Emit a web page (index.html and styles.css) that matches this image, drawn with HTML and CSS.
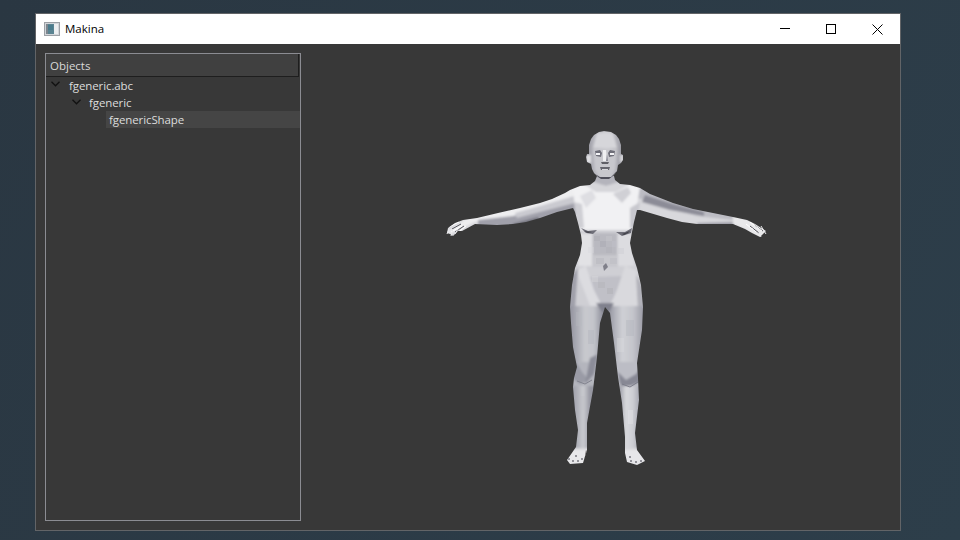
FILE: index.html
```html
<!DOCTYPE html>
<html lang="en">
<head>
<meta charset="utf-8">
<title>Makina</title>
<link rel="stylesheet" href="styles.css">
</head>
<body>
<div class="window">
  <header class="titlebar">
    <svg class="app-icon" width="16" height="14" viewBox="0 0 16 14">
      <rect x="0.5" y="0.5" width="15" height="13" fill="#d3d6da" stroke="#9da1a6"/>
      <rect x="2" y="2" width="8" height="10" fill="#5a8492"/>
      <rect x="2" y="2" width="2" height="10" fill="#7d868e"/>
      <rect x="4" y="3" width="5" height="5" fill="#4a7b8c"/>
      <rect x="10" y="2" width="4" height="10" fill="#eceef0"/>
    </svg>
    <span class="title">Makina</span>
    <div class="controls">
      <button class="ctl"><svg width="10" height="10" viewBox="0 0 10 10"><path d="M0 4.5H10" stroke="#000" fill="none"/></svg></button>
      <button class="ctl"><svg width="10" height="10" viewBox="0 0 10 10"><rect x="0.5" y="0.5" width="9" height="9" stroke="#000" fill="none"/></svg></button>
      <button class="ctl"><svg width="11" height="11" viewBox="0 0 11 11"><path d="M0.5 0.5L10.5 10.5M10.5 0.5L0.5 10.5" stroke="#000" fill="none"/></svg></button>
    </div>
  </header>
  <main class="content">
    <section class="panel">
      <div class="panel-head">Objects</div>
      <ul class="tree">
        <li class="row lvl0"><svg class="chev" width="9" height="6" viewBox="0 0 9 6"><path d="M0.5 0.8L4.5 4.8L8.5 0.8" fill="none" stroke="#111" stroke-width="1.3"/></svg>fgeneric.abc</li>
        <li class="row lvl1"><svg class="chev" width="9" height="6" viewBox="0 0 9 6"><path d="M0.5 0.8L4.5 4.8L8.5 0.8" fill="none" stroke="#111" stroke-width="1.3"/></svg>fgeneric</li>
        <li class="row lvl2"><span class="sel">fgenericShape</span></li>
      </ul>
    </section>
    <div class="viewport">
      <svg class="figure" width="335" height="345" viewBox="440 125 335 345">
        <defs>
          <filter id="soft" x="-5%" y="-5%" width="110%" height="110%"><feGaussianBlur stdDeviation="1"/></filter>
          <filter id="softer" x="-20%" y="-20%" width="140%" height="140%"><feGaussianBlur stdDeviation="0.6"/></filter>
          <clipPath id="body"><path shape-rendering="crispEdges" d="M597 176L595 181L590 185L580 186L570 190L565 193L552 199L540 203L520 208L498 213L477 218L463 220L455 223L448 228L447 233L450 234L453 236L458 231L462 231L475 224L497 225L513 224L526 222L540 218L557 212L573 208L575 212L578 223L581 235L582 243L580 255L575 268L572 285L570 307L571 323L573 347L577 367L574 378L573 387L575 410L578 430L576 447L567 460L570 464L583 463L587 450L587 423L593 390L597 357L600 323L605 307L610 313L614 343L618 377L622 403L625 437L625 453L627 462L637 465L645 461L637 450L635 433L639 400L638 378L637 363L642 330L643 307L641 285L637 268L632 253L630 243L632 232L634 222L637 210L640 210L667 218L682 222L697 224L733 224L745 229L752 233L760 237L766 231L755 224L747 220L733 217L693 209L673 203L650 194L640 188L630 185L620 184L615 180L614 176Z"/></clipPath>
          <clipPath id="headclip"><path shape-rendering="crispEdges" d="M604 131L599 132L594 135L591 139L589 145L589 154L587 154L586 157L587 162L591 164L592 169L594 173L598 177L601 179L609 179L613 176L617 171L618 165L621 163L623 160L623 155L621 154L621 145L619 139L616 135L611 132Z"/></clipPath>
          <linearGradient id="thighL" x1="570" x2="603" y1="0" y2="0" gradientUnits="userSpaceOnUse">
            <stop offset="0" stop-color="#92939e"/><stop offset=".2" stop-color="#a9aab3"/><stop offset=".45" stop-color="#c8c9ce"/><stop offset=".72" stop-color="#c4c5cb"/><stop offset=".88" stop-color="#a5a6af"/><stop offset="1" stop-color="#8c8d99"/>
          </linearGradient>
          <linearGradient id="thighR" x1="608" x2="644" y1="0" y2="0" gradientUnits="userSpaceOnUse">
            <stop offset="0" stop-color="#8f909b"/><stop offset=".2" stop-color="#b3b4bc"/><stop offset=".4" stop-color="#cfd0d5"/><stop offset=".7" stop-color="#c4c5cb"/><stop offset=".88" stop-color="#a9aab3"/><stop offset="1" stop-color="#9a9ba5"/>
          </linearGradient>
          <linearGradient id="shinL" x1="573" x2="590" y1="0" y2="0" gradientUnits="userSpaceOnUse">
            <stop offset="0" stop-color="#a0a1ab"/><stop offset=".3" stop-color="#b2b3bb"/><stop offset=".6" stop-color="#cbccd1"/><stop offset=".8" stop-color="#b2b3bb"/><stop offset="1" stop-color="#9697a2"/>
          </linearGradient>
          <linearGradient id="shinR" x1="620" x2="640" y1="0" y2="0" gradientUnits="userSpaceOnUse">
            <stop offset="0" stop-color="#a0a1ab"/><stop offset=".3" stop-color="#d8d9dd"/><stop offset=".65" stop-color="#cdced3"/><stop offset=".85" stop-color="#b5b6be"/><stop offset="1" stop-color="#a4a5af"/>
          </linearGradient>
          <linearGradient id="headg" x1="0" x2="1" y1="0" y2="0">
            <stop offset="0" stop-color="#85858f"/><stop offset=".18" stop-color="#b0b0b8"/><stop offset=".55" stop-color="#cfcfd3"/><stop offset=".85" stop-color="#a8a8b0"/><stop offset="1" stop-color="#7e7e88"/>
          </linearGradient>
        </defs>

        <g clip-path="url(#body)">
          <g filter="url(#soft)">
            <rect x="440" y="170" width="340" height="300" fill="#d8d8dc"/>
            <!-- neck -->
            <rect x="592" y="172" width="28" height="14" fill="#b4b4bc"/>
            <!-- left arm -->
            <path d="M440 238L475 212L540 198L578 184L578 204L540 212L513 219L475 222Z" fill="#eeeef0"/>
            <path d="M478 220L513 216L540 210L576 202L576 214L540 222L513 228L478 227Z" fill="#a0a0aa"/>
            <path d="M515 213L540 206L574 196L575 203L540 212L517 218Z" fill="#cacad0"/>
            <path d="M512 224L538 217L540 221L512 227Z" fill="#74747f"/>
            <!-- right arm -->
            <path d="M640 187L673 200L693 206L733 214L770 232L750 232L733 220L697 216L670 209L638 198Z" fill="#bcbcc3"/>
            <path d="M645 195L673 204L704 212L704 216L670 210L642 202Z" fill="#8c8c97"/>
            <path d="M638 203L667 211L697 218L733 221L733 228L697 228L667 222L638 214Z" fill="#d8d8dc"/>
            <path d="M697 223L733 222L733 228L697 228Z" fill="#9c9ca6"/>
            <path d="M733 214L750 221L772 232L760 240L745 229L733 224Z" fill="#e8e8ea"/>
            <!-- chest -->
            <path d="M572 186L590 183L606 186L622 183L640 186L636 212L632 230L580 230L576 212Z" fill="#f1f1f3"/>
            <path d="M582 183L594 182L606 186L618 182L630 184L616 192L606 192L596 192Z" fill="#d6d6da"/>
            <path d="M613 194L628 187L631 193L622 203Z" fill="#d0d0d5"/>
            <path d="M574 202L582 204L584 228L577 228Z" fill="#cfcfd4"/>
            <path d="M640 202L630 208L630 228L636 228Z" fill="#c8c8ce"/>
            <path d="M580 196L592 190L596 198L586 208Z" fill="#dedee2"/>
            <!-- abdomen -->
            <rect x="570" y="230" width="74" height="78" fill="#cfcfd4"/>
            <rect x="578" y="234" width="14" height="32" fill="#e2e2e5"/>
            <rect x="618" y="234" width="16" height="32" fill="#dcdce0"/>
            <rect x="593" y="233" width="24" height="22" fill="#b9b9c0"/>
            <rect x="592" y="255" width="26" height="12" fill="#c8c8cd"/>
            <path d="M590 277L622 276L618 292L608 306L602 306L594 292Z" fill="#c0c0c7"/>
            <path d="M576 270L586 266L594 290L602 306L590 306Z" fill="#dcdce0"/>
            <path d="M636 270L625 266L617 290L610 306L640 306Z" fill="#d9d9dd"/>
            <path d="M568 280L578 268L575 310L568 310Z" fill="#a0a0aa"/>
            <path d="M636 275L645 290L645 310L638 310Z" fill="#b2b2ba"/>
            <!-- legs -->
            <rect x="566" y="306" width="40" height="60" fill="url(#thighL)"/>
            <rect x="606" y="306" width="40" height="60" fill="url(#thighR)"/>
            <path d="M596 303L614 303L609 312L602 312Z" fill="#80818d"/>
            <!-- knees -->
            <rect x="566" y="362" width="36" height="26" fill="#b4b5bd"/>
            <rect x="606" y="362" width="40" height="26" fill="#bcbdc5"/>
            <path d="M574 358L582 372L589 380L580 384L572 378Z" fill="#9a9ba6"/>
            <path d="M590 358L598 354L594 374L585 384Z" fill="#8c8d99"/>
            <path d="M618 372L626 380L636 374L640 368L640 382L625 388L620 384Z" fill="#878894"/>
            <rect x="566" y="386" width="40" height="62" fill="url(#shinL)"/>
            <rect x="606" y="386" width="40" height="62" fill="url(#shinR)"/>
            <!-- feet -->
            <rect x="560" y="450" width="34" height="16" fill="#e8e8ea"/>
            <rect x="620" y="450" width="30" height="16" fill="#e6e6e9"/>
          </g>
          <!-- low-contrast mesh facets -->
          <g opacity="0.35">
            <rect x="594" y="236" width="6" height="5" fill="#a8a8b0"/><rect x="606" y="236" width="6" height="5" fill="#cacacf"/><rect x="600" y="241" width="6" height="6" fill="#a4a4ad"/><rect x="612" y="241" width="5" height="6" fill="#c4c4ca"/><rect x="588" y="247" width="6" height="6" fill="#d8d8dc"/><rect x="594" y="247" width="6" height="6" fill="#bcbcc3"/><rect x="606" y="247" width="6" height="6" fill="#aeaeb6"/><rect x="618" y="248" width="6" height="6" fill="#c8c8cd"/><rect x="596" y="258" width="8" height="6" fill="#b0b0b8"/><rect x="610" y="258" width="7" height="6" fill="#b8b8bf"/><rect x="598" y="282" width="7" height="6" fill="#aeaeb6"/><rect x="607" y="288" width="6" height="6" fill="#a8a8b0"/><rect x="592" y="276" width="6" height="6" fill="#dcdce0"/><rect x="576" y="312" width="6" height="14" fill="#b8b9c0"/><rect x="588" y="330" width="6" height="14" fill="#b0b1b9"/><rect x="626" y="320" width="8" height="16" fill="#b0b1b9"/><rect x="617" y="338" width="7" height="14" fill="#dcdce0"/><rect x="580" y="396" width="5" height="14" fill="#bcbdc4"/><rect x="628" y="410" width="5" height="14" fill="#e8e8ea"/>
          </g>
          <!-- navel, knee creases -->
          <path d="M603 266L606 263L608 267L604 271Z" fill="#80808a" filter="url(#softer)"/>
          <path d="M577 381L585 384L592 380" stroke="#82838e" fill="none"/>
          <path d="M622 384L630 387L638 382" stroke="#7c7d89" fill="none"/>
          <!-- toes -->
          <path d="M568 459h2M572 461h2M577 461h2M581 459h2M630 461h2M635 462h2M640 461h2M629 457h2M575 456h2" stroke="#77777f" stroke-width="1.4" fill="none"/>
          <path d="M586 450L587 452L585 462L584 462Z" fill="#5d5657"/>
          <path d="M449 227L459 222M451 232L462 226M456 234L466 226" stroke="#fff" fill="none"/>
          <path d="M452 229L461 224M455 232L464 226M750 226L759 233M754 225L763 231" stroke="#54545b" fill="none"/>
          <path d="M746 224L756 232M750 222L762 231" stroke="#fff" fill="none"/>
        </g>
        <!-- fingers -->
        <path d="M449 229L447 234M453 229L451 236M458 229L455 234M761 226L766 234M757 228L761 237M752 228L756 234" stroke="#e9e9ec" fill="none"/>
        <!-- under-breast shadow -->
        <path d="M581 228L588 231L597 230L593 234L586 233Z" fill="#6e6e78" filter="url(#softer)"/>
        <path d="M616 232L625 232L632 228L631 233L622 236Z" fill="#6e6e78" filter="url(#softer)"/>
        <path d="M584 231L592 232L588 233Z" fill="#42424a"/>
        <path d="M622 234L630 231L628 233L624 235Z" fill="#42424a"/>

        <!-- head -->
        <g clip-path="url(#headclip)">
          <g filter="url(#soft)">
            <rect x="585" y="130" width="40" height="54" fill="url(#headg)"/>
            <path d="M597 133L613 133L617 148L593 148Z" fill="#d6d6da"/>
            <path d="M593 149H617L615 170L610 177H600L595 170Z" fill="#c8c8cd"/>
            <rect x="586" y="155" width="5" height="8" fill="#e0e0e3"/>
            <rect x="620" y="155" width="4" height="7" fill="#d4d4d8"/>
          </g>
          <g filter="url(#softer)">
            <path d="M595 151L600 150L602 153L601 157L596 156ZM615 151L610 150L608 153L609 157L614 156Z" fill="#6e6e78"/>
            <path d="M596 153H600V155H596ZM610 153H614V155H610Z" fill="#f4f4f6"/>
            <path d="M603 150L606 150L607 161L603 161Z" fill="#f0f0f2"/>
            <path d="M607 154L608 161L606 161Z" fill="#8a8a94"/>
            <path d="M601 162L609 162L608 164L602 164Z" fill="#5e5e66"/>
            <path d="M600 167L610 167L609 170L601 170Z" fill="#66666e"/>
            <path d="M595 174L600 177H611L616 172L616 181L596 181Z" fill="#50505a"/>
          </g>
          <rect x="602" y="169" width="6" height="1" fill="#d8d8dc"/>
        </g>
      </svg>
    </div>
  </main>
</div>
</body>
</html>
```

FILE: styles.css
```css
* { box-sizing: border-box; }
html, body { margin: 0; height: 100%; }
body {
  width: 960px;
  height: 540px;
  overflow: hidden;
  padding: 13px 0 0 35px;
  background: linear-gradient(120deg, #2a3742, #2d3e4a);
  font-family: "Open Sans", "Liberation Sans", sans-serif;
  font-size: 11.5px;
}
.window {
  width: 866px;
  height: 518px;
  border: 1px solid #626467;
  display: flex;
  flex-direction: column;
  background: #383838;
}
.titlebar {
  height: 30px;
  background: #fff;
  display: flex;
  align-items: center;
  padding-left: 8px;
  flex: none;
}
.app-icon { display: block; flex: none; }
.title { margin-left: 5px; color: #000; position: relative; top: -1px; }
.controls { margin-left: auto; display: flex; height: 100%; }
.ctl {
  width: 46px;
  height: 100%;
  border: 0;
  padding: 0;
  background: none;
  display: flex;
  align-items: center;
  justify-content: center;
}
.content { flex: 1; display: flex; padding: 9px; min-height: 0; }
.panel {
  width: 256px;
  height: 468px;
  border: 1px solid #8b8c92;
  flex: none;
}
.panel-head {
  height: 23px;
  line-height: 24px;
  padding-left: 4px;
  margin-right: 1px;
  background: #404040;
  color: #d8d8d8;
  border-bottom: 1px solid #1e1e1e;
  border-right: 1px solid #1e1e1e;
}
.tree { list-style: none; margin: 0; padding: 0; color: #dcdcdc; letter-spacing: -0.1px; }
.row { height: 17px; line-height: 17px; display: flex; align-items: center; white-space: nowrap; }
.chev { flex: none; margin-right: 9px; position: relative; top: -2px; }
.lvl0 { padding-left: 5px; }
.lvl1 { padding-left: 26px; }
.lvl1 .chev { margin-right: 8px; top: -1px; }
.lvl2 { padding-left: 60px; }
.sel { flex: 1; height: 17px; background: #454545; padding-left: 3px; }
.viewport { flex: 1; padding: 72px 0 0 139px; min-width: 0; }
.figure { display: block; }
```
